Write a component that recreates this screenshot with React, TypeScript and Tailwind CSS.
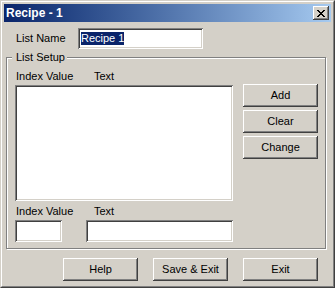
const font = { fontFamily: '"Liberation Sans", Arial, sans-serif' };

const sunken =
  "bg-white shadow-[inset_1px_1px_0_#808080,inset_-1px_-1px_0_#ffffff,inset_2px_2px_0_#404040,inset_-2px_-2px_0_#d4d0c8]";
const raised =
  "bg-[#d4d0c8] shadow-[inset_-1px_-1px_0_#404040,inset_1px_1px_0_#ffffff,inset_-2px_-2px_0_#808080]";

function Btn({ children, className = "" }: { children: React.ReactNode; className?: string }) {
  return (
    <button className={`${raised} w-[75px] h-[23px] flex items-center justify-center text-[11px] text-black leading-none ${className}`}>
      {children}
    </button>
  );
}

function Label({ children, className = "" }: { children: React.ReactNode; className?: string }) {
  return <span className={`text-[11px] leading-[13px] text-black ${className}`}>{children}</span>;
}

export default function App() {
  return (
    <div style={font} className="w-[335px] h-[288px] border border-t-[#d4d0c8] border-l-[#d4d0c8] border-r-[#404040] border-b-[#404040]">
      <div className="h-full border border-t-white border-l-white border-r-[#808080] border-b-[#808080] bg-[#d4d0c8] p-[2px] flex flex-col">
        {/* title bar */}
        <div className="h-[18px] shrink-0 flex items-center justify-between pl-[2px] pr-[2px] bg-linear-to-r from-[#0a246a] to-[#a6caf0]">
          <span className="text-white font-bold text-[12px] leading-none">Recipe - 1</span>
          <div className={`${raised} w-[16px] h-[14px] flex items-center justify-center`}>
            <svg width="8" height="7" viewBox="0 0 8 7" shapeRendering="crispEdges">
              <path d="M0 0h2v1h-2zM6 0h2v1h-2zM1 1h2v1h-2zM5 1h2v1h-2zM2 2h4v1h-4zM3 3h2v1h-2zM2 4h4v1h-4zM1 5h2v1h-2zM5 5h2v1h-2zM0 6h2v1h-2zM6 6h2v1h-2z" fill="#000" />
            </svg>
          </div>
        </div>

        {/* list name */}
        <div className="flex items-center mt-[6px] pl-[12px]">
          <Label className="w-[62px]">List Name</Label>
          <div className={`${sunken} w-[125px] h-[21px] flex items-center pl-[3px]`}>
            <span className="bg-[#0a246a] text-white text-[11px] leading-[13px]">Recipe 1</span>
          </div>
        </div>

        {/* group box */}
        <div className="relative ml-[2px] mt-[8px] w-[320px] border border-[#808080] shadow-[inset_1px_1px_0_#ffffff,1px_1px_0_#ffffff] pb-[6px]">
          <span className="absolute -top-[7px] left-[5px] bg-[#d4d0c8] pl-[4px] pr-[2px] text-[11px] leading-[13px] text-black">
            List Setup
          </span>
          <div className="flex mt-[12px] pl-[9px]">
            <Label className="w-[78px]">Index Value</Label>
            <Label>Text</Label>
          </div>
          <div className="flex items-start mt-[2px] ml-[8px]">
            <div className={`${sunken} w-[218px] h-[116px]`} />
            <div className="flex flex-col gap-[3px] ml-[10px] -mt-[1px]">
              <Btn>Add</Btn>
              <Btn>Clear</Btn>
              <Btn>Change</Btn>
            </div>
          </div>
          <div className="flex mt-[4px] pl-[9px]">
            <Label className="w-[78px]">Index Value</Label>
            <Label>Text</Label>
          </div>
          <div className="flex mt-[2px] ml-[8px] gap-[24px]">
            <div className={`${sunken} w-[47px] h-[22px]`} />
            <div className={`${sunken} w-[147px] h-[22px]`} />
          </div>
        </div>

        {/* bottom buttons */}
        <div className="flex mt-[9px] ml-[59px] gap-[15px]">
          <Btn>Help</Btn>
          <Btn>Save &amp; Exit</Btn>
          <Btn>Exit</Btn>
        </div>
      </div>
    </div>
  );
}
